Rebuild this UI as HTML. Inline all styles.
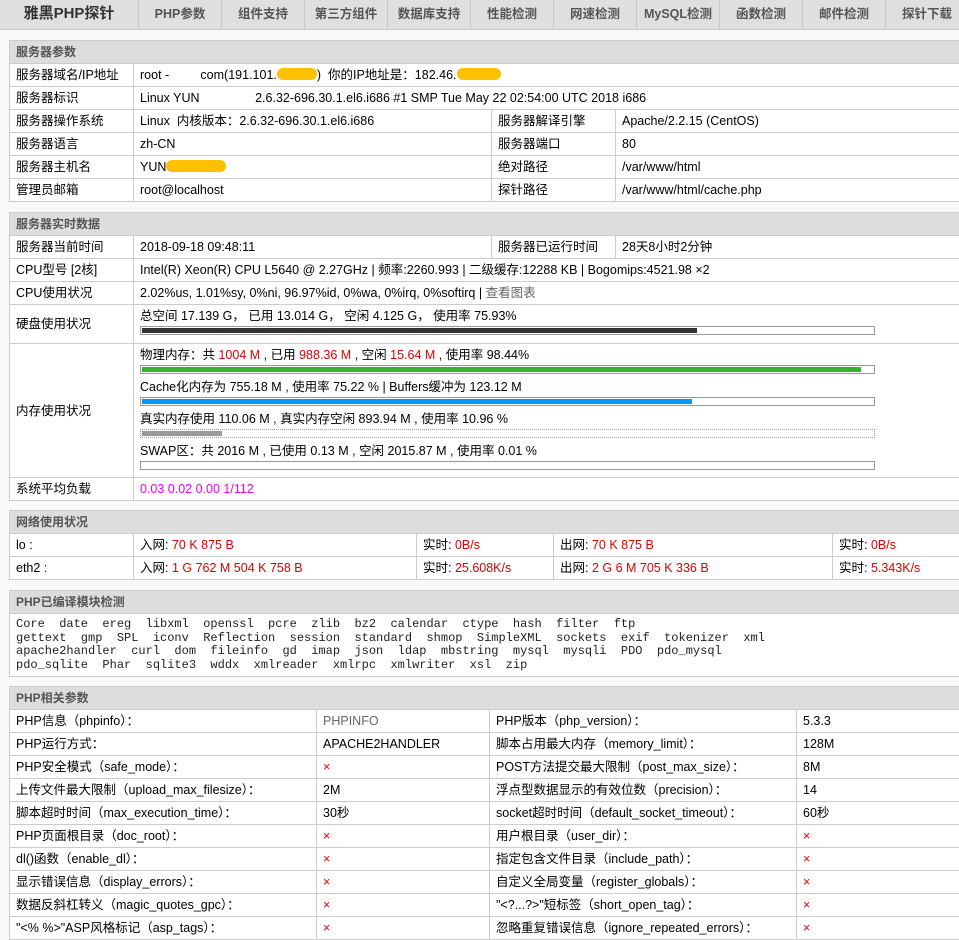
<!DOCTYPE html>
<html><head><meta charset="utf-8"><style>
*{margin:0;padding:0;box-sizing:border-box}
body{width:959px;height:933px;overflow:hidden;background:#f9f9f9;font-family:"Liberation Sans","Noto Sans CJK SC",sans-serif;font-size:12.5px;color:#000;position:relative}
#nav{position:absolute;left:0;top:0;width:1000px;height:30px;background:#dfdfdf;border-bottom:1px solid #ccc;display:flex}
#nav div{width:83px;border-right:1px solid #c8c8c8;text-align:center;line-height:28px;font-weight:bold;color:#555;font-size:12.5px}
#nav div.logo{width:139px;font-size:15px;color:#333}
table{position:absolute;left:9px;width:1000px;border-collapse:collapse;background:#fff;table-layout:fixed}
td{border:1px solid #ccc;height:23px;line-height:16px;padding:0 6px;white-space:nowrap;overflow:hidden;vertical-align:middle}
th{background:#ddd;border:1px solid #ccc;height:23px;line-height:16px;text-align:left;padding:0 6px;font-weight:bold;color:#555;font-size:12px}
.r{color:#d00}
.m{color:#e0e}
.g{color:#666}
.bar{width:735px;height:9px;border:1px solid #999;margin:2px 0 5px 0;padding:1px;background:#fff}
.bar i{display:block;height:5px}
.mono{font-family:"Liberation Mono",monospace;font-size:12px;line-height:13.5px;padding:4px 6px;white-space:normal;color:#222}
.y{display:inline-block;background:#ffc000;border-radius:8px;height:12px;vertical-align:-1px}
.x{color:#e00}
</style></head><body>
<div id="nav"><div class="logo">雅黑PHP探针</div><div>PHP参数</div><div>组件支持</div><div>第三方组件</div><div>数据库支持</div><div>性能检测</div><div>网速检测</div><div>MySQL检测</div><div>函数检测</div><div>邮件检测</div><div>探针下载</div></div>

<table style="top:40px">
<col style="width:124px"><col style="width:358px"><col style="width:124px"><col>
<tr><th colspan="4">服务器参数</th></tr>
<tr><td>服务器域名/IP地址</td><td colspan="3">root - &nbsp;&nbsp;&nbsp;&nbsp;&nbsp;&nbsp;&nbsp;&nbsp;com(191.101.<span class="y" style="width:40px"></span>) &nbsp;你的IP地址是：182.46.<span class="y" style="width:44px"></span></td></tr>
<tr><td>服务器标识</td><td colspan="3">Linux YUN&nbsp;&nbsp;&nbsp;&nbsp;&nbsp;&nbsp;&nbsp;&nbsp;&nbsp;&nbsp;&nbsp;&nbsp;&nbsp;&nbsp;&nbsp;&nbsp;2.6.32-696.30.1.el6.i686 #1 SMP Tue May 22 02:54:00 UTC 2018 i686</td></tr>
<tr><td>服务器操作系统</td><td>Linux &nbsp;内核版本：2.6.32-696.30.1.el6.i686</td><td>服务器解译引擎</td><td>Apache/2.2.15 (CentOS)</td></tr>
<tr><td>服务器语言</td><td>zh-CN</td><td>服务器端口</td><td>80</td></tr>
<tr><td>服务器主机名</td><td>YUN<span class="y" style="width:60px"></span></td><td>绝对路径</td><td>/var/www/html</td></tr>
<tr><td>管理员邮箱</td><td>root@localhost</td><td>探针路径</td><td>/var/www/html/cache.php</td></tr>
</table>

<table style="top:212px">
<col style="width:124px"><col style="width:358px"><col style="width:124px"><col>
<tr><th colspan="4">服务器实时数据</th></tr>
<tr><td>服务器当前时间</td><td>2018-09-18 09:48:11</td><td>服务器已运行时间</td><td>28天8小时2分钟</td></tr>
<tr><td>CPU型号 [2核]</td><td colspan="3">Intel(R) Xeon(R) CPU L5640 @ 2.27GHz | 频率:2260.993 | 二级缓存:12288 KB | Bogomips:4521.98 ×2</td></tr>
<tr><td>CPU使用状况</td><td colspan="3">2.02%us, 1.01%sy, 0%ni, 96.97%id, 0%wa, 0%irq, 0%softirq | <span class="g">查看图表</span></td></tr>
<tr><td style="height:39px">硬盘使用状况</td><td colspan="3" style="padding-top:3px;vertical-align:top">总空间 17.139 G， 已用 13.014 G， 空闲 4.125 G， 使用率 75.93%<div class="bar" style="margin-bottom:0"><i style="width:75.9%;background:#333"></i></div></td></tr>
<tr><td style="height:134px">内存使用状况</td><td colspan="3" style="padding-top:3px;vertical-align:top">物理内存：共 <span class="r">1004 M</span> , 已用 <span class="r">988.36 M</span> , 空闲 <span class="r">15.64 M</span> , 使用率 98.44%<div class="bar"><i style="width:98.4%;background:#36b22e"></i></div>Cache化内存为 755.18 M , 使用率 75.22 % | Buffers缓冲为 123.12 M<div class="bar"><i style="width:75.2%;background:#0a96f5"></i></div>真实内存使用 110.06 M , 真实内存空闲 893.94 M , 使用率 10.96 %<div class="bar" style="border:1px dotted #999"><i style="width:11%;background:#999"></i></div>SWAP区：共 2016 M , 已使用 0.13 M , 空闲 2015.87 M , 使用率 0.01 %<div class="bar" style="margin-bottom:0"><i style="width:0"></i></div></td></tr>
<tr><td>系统平均负载</td><td colspan="3" class="m">0.03 0.02 0.00 1/112</td></tr>
</table>

<table style="top:510px">
<col style="width:124px"><col style="width:283px"><col style="width:137px"><col style="width:279px"><col>
<tr><th colspan="5">网络使用状况</th></tr>
<tr><td>lo :</td><td>入网: <span class="r">70 K 875 B</span></td><td>实时: <span class="r">0B/s</span></td><td>出网: <span class="r">70 K 875 B</span></td><td>实时: <span class="r">0B/s</span></td></tr>
<tr><td>eth2 :</td><td>入网: <span class="r">1 G 762 M 504 K 758 B</span></td><td>实时: <span class="r">25.608K/s</span></td><td>出网: <span class="r">2 G 6 M 705 K 336 B</span></td><td>实时: <span class="r">5.343K/s</span></td></tr>
</table>

<table style="top:590px;width:1000px">
<tr><th>PHP已编译模块检测</th></tr>
<tr><td class="mono" style="height:63px;width:950px">Core&nbsp; date&nbsp; ereg&nbsp; libxml&nbsp; openssl&nbsp; pcre&nbsp; zlib&nbsp; bz2&nbsp; calendar&nbsp; ctype&nbsp; hash&nbsp; filter&nbsp; ftp<br>gettext&nbsp; gmp&nbsp; SPL&nbsp; iconv&nbsp; Reflection&nbsp; session&nbsp; standard&nbsp; shmop&nbsp; SimpleXML&nbsp; sockets&nbsp; exif&nbsp; tokenizer&nbsp; xml<br>apache2handler&nbsp; curl&nbsp; dom&nbsp; fileinfo&nbsp; gd&nbsp; imap&nbsp; json&nbsp; ldap&nbsp; mbstring&nbsp; mysql&nbsp; mysqli&nbsp; PDO&nbsp; pdo_mysql<br>pdo_sqlite&nbsp; Phar&nbsp; sqlite3&nbsp; wddx&nbsp; xmlreader&nbsp; xmlrpc&nbsp; xmlwriter&nbsp; xsl&nbsp; zip</td></tr>
</table>

<table style="top:686px">
<col style="width:307px"><col style="width:173px"><col style="width:307px"><col>
<tr><th colspan="4">PHP相关参数</th></tr>
<tr><td>PHP信息（phpinfo）：</td><td class="g">PHPINFO</td><td>PHP版本（php_version）：</td><td>5.3.3</td></tr>
<tr><td>PHP运行方式：</td><td>APACHE2HANDLER</td><td>脚本占用最大内存（memory_limit）：</td><td>128M</td></tr>
<tr><td>PHP安全模式（safe_mode）：</td><td class="x">×</td><td>POST方法提交最大限制（post_max_size）：</td><td>8M</td></tr>
<tr><td>上传文件最大限制（upload_max_filesize）：</td><td>2M</td><td>浮点型数据显示的有效位数（precision）：</td><td>14</td></tr>
<tr><td>脚本超时时间（max_execution_time）：</td><td>30秒</td><td>socket超时时间（default_socket_timeout）：</td><td>60秒</td></tr>
<tr><td>PHP页面根目录（doc_root）：</td><td class="x">×</td><td>用户根目录（user_dir）：</td><td class="x">×</td></tr>
<tr><td>dl()函数（enable_dl）：</td><td class="x">×</td><td>指定包含文件目录（include_path）：</td><td class="x">×</td></tr>
<tr><td>显示错误信息（display_errors）：</td><td class="x">×</td><td>自定义全局变量（register_globals）：</td><td class="x">×</td></tr>
<tr><td>数据反斜杠转义（magic_quotes_gpc）：</td><td class="x">×</td><td>"&lt;?...?&gt;"短标签（short_open_tag）：</td><td class="x">×</td></tr>
<tr><td>"&lt;% %&gt;"ASP风格标记（asp_tags）：</td><td class="x">×</td><td>忽略重复错误信息（ignore_repeated_errors）：</td><td class="x">×</td></tr>
</table>
</body></html>
